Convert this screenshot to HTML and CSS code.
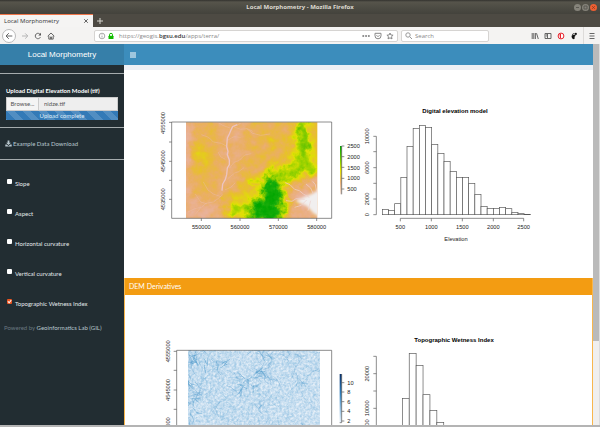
FILE: index.html
```html
<!DOCTYPE html>
<html lang="en">
<head>
<meta charset="utf-8">
<title>Local Morphometry</title>
<link rel="stylesheet" href="styles.css">
</head>
<body>
<div class="window">
  <header class="titlebar">
    <span class="window-title">Local Morphometry - Mozilla Firefox</span>
    <div class="window-controls">
      <button class="wc" aria-label="Minimize"><svg viewBox="0 0 7 7"><path d="M2 3.5h3"/></svg></button>
      <button class="wc" aria-label="Maximize"><svg viewBox="0 0 7 7"><path d="M2 2h3v3H2z"/></svg></button>
      <button class="wc wc-close" aria-label="Close"><svg viewBox="0 0 7 7"><path d="M2.3 2.3l2.4 2.4M4.7 2.3L2.3 4.7"/></svg></button>
    </div>
  </header>

  <div class="tabstrip">
    <div class="tab"><span>Local Morphometry</span><button class="plain" aria-label="Close tab"><svg class="ic-s" viewBox="0 0 6 6"><path d="M1.2 1.2l3.6 3.6M4.8 1.2L1.2 4.8"/></svg></button></div>
    <button class="plain new-tab" aria-label="New tab"><svg class="ic-m" viewBox="0 0 8 8"><path d="M4 1v6M1 4h6"/></svg></button>
  </div>

  <nav class="toolbar">
    <div class="nav-buttons">
      <button class="plain back" aria-label="Back"><svg class="ic-m" viewBox="0 0 8 8"><path d="M7.3 4H1.2M3.8 1.2L1 4l2.8 2.8"/></svg></button>
      <button class="plain forward" aria-label="Forward"><svg class="ic-m" viewBox="0 0 8 8"><path d="M1 4h5.6M4.2 1.4L6.8 4 4.2 6.6"/></svg></button>
      <button class="plain" aria-label="Reload"><svg class="ic-m" viewBox="0 0 8 8"><path d="M6.4 5.2A2.7 2.7 0 1 1 6.3 2.6"/><path class="solid" d="M7 .8v2.7H4.3z"/></svg></button>
      <button class="plain" aria-label="Home"><svg class="ic-m" viewBox="0 0 8 8"><path d="M.7 4.2L4 1l3.3 3.2M1.8 3.8v3.3h4.4V3.8M3.4 7V5h1.2v2"/></svg></button>
    </div>
    <div class="urlbar">
      <svg class="ic-m info" viewBox="0 0 8 8"><circle cx="4" cy="4" r="2.8"/><path d="M4 3.6v2M4 2.3v.6"/></svg>
      <svg class="ic-m lock" viewBox="0 0 8 8"><path d="M2.5 4V2.8a1.5 1.5 0 0 1 3 0V4"/><rect x="1.5" y="3.7" width="5" height="3.3" rx=".5"/></svg>
      <a class="url" href="#">https://geogis.<b>bgsu.edu</b>/apps/terra/</a>
      <svg class="ic-m" viewBox="0 0 8 8"><path class="dots" d="M1.2 4h.1M4 4h.1M6.8 4h.1"/></svg>
      <svg class="ic-m" viewBox="0 0 8 8"><path d="M1 1.3h6v2.5a3 3 0 0 1-6 0zM2.5 3.2L4 4.7l1.5-1.5"/></svg>
      <svg class="ic-m" viewBox="0 0 8 8"><path d="M4 1l.9 2 2.2.2-1.6 1.5.5 2.2L4 5.8 2 6.9l.5-2.2L.9 3.2 3.1 3z"/></svg>
    </div>
    <label class="search"><svg class="ic-m" viewBox="0 0 8 8"><circle cx="3" cy="3" r="2.2"/><path d="M4.7 4.7L7 7"/></svg><input type="text" placeholder="Search" aria-label="Search"></label>
    <div class="tool-icons">
      <svg class="ic-m" viewBox="0 0 8 8"><path d="M1.2 1v6M2.8 1v6M4.4 1v6M5.5 1.2L7.3 7"/></svg>
      <svg class="ic-m" viewBox="0 0 8 8"><path d="M1 1.5h6v5H1zM3.5 1.5v5M1.8 2.8h1M1.8 4h1"/></svg>
      <svg class="ic-m" viewBox="0 0 8 8"><circle class="adblock" cx="4" cy="4" r="2.9"/><path class="hand" d="M2.500 2h1.500v4H3z"/></svg>
      <svg class="ic-m" viewBox="0 0 8 8"><path class="foot" d="M1.8 3.5c1-1 3.600-.8 3.800.1.100.8-1 .7-1.100 1.400 0 .7.500.8.100 1.600C4 7.700 2.500 7 2 6 1.600 5 1.400 4 1.800 3.500z"/><circle class="foot" cx="5.800" cy="1.900" r="1.100"/><circle class="foot" cx="3.900" cy="1.700" r=".6"/><circle class="foot" cx="2.500" cy="2.200" r=".5"/></svg>
    </div>
    <button class="plain menu" aria-label="Menu"><svg class="ic-m" viewBox="0 0 8 8"><path d="M1.500 1.500h5M1.500 4h5M1.500 6.500h5"/></svg></button>
  </nav>

  <div class="page">
    <aside class="sidebar">
      <div class="brand">Local Morphometry</div>
      <section class="upload">
        <label for="dem">Upload Digital Elevation Model (tif)</label>
        <div class="file"><button>Browse...</button><input id="dem" type="text" value="nidze.tif" readonly></div>
        <div class="progress">Upload complete</div>
      </section>
      <section class="download">
        <a href="#"><svg class="dl" viewBox="0 0 7 7"><path d="M2.600.5h1.800v2.200h1.500L3.500 5 1.100 2.700h1.500z"/><path d="M.3 4.500h1.400l1.800 1.400 1.800-1.400h1.400v2H.3z"/></svg>Example Data Download</a>
      </section>
      <section class="options">
        <label><input type="checkbox"><span>Slope</span></label>
        <label><input type="checkbox"><span>Aspect</span></label>
        <label><input type="checkbox"><span>Horizontal curvature</span></label>
        <label><input type="checkbox"><span>Vertical curvature</span></label>
        <label><input type="checkbox" checked><span>Topographic Wetness Index</span></label>
      </section>
      <footer class="powered">Powered by <a href="#">Geoinformatics Lab (GIL)</a></footer>
    </aside>

    <main class="main">
      <div class="navbar"><button class="plain" aria-label="Toggle sidebar"><svg class="bars" viewBox="0 0 6 6"><path d="M0 1h6M0 3h6M0 5h6"/></svg></button></div>
      <section class="box box-dem">
        <div class="plots">
          <svg class="plot" viewBox="0 0 630 420" role="img" aria-label="Elevation map">
            <defs>
              <clipPath id="demClip"><rect x="108" y="67" width="394" height="288"/></clipPath>
              <filter id="terrain" filterUnits="userSpaceOnUse" x="108" y="67" width="394" height="288" color-interpolation-filters="sRGB">
                <feTurbulence type="fractalNoise" baseFrequency=".04" numOctaves="3" seed="8" result="n"/>
                <feDisplacementMap in="SourceGraphic" in2="n" scale="44" xChannelSelector="R" yChannelSelector="G" result="d"/>
                <feColorMatrix in="n" type="matrix" values="0 0 1 0 0  0 0 1 0 0  0 0 1 0 0  0 0 0 0 1" result="g"/>
                <feComposite in="d" in2="g" operator="arithmetic" k1="0" k2="1" k3=".2" k4="-.09" result="h"/>
                <feComponentTransfer in="h">
                  <feFuncR type="table" tableValues=".95 .93 .91 .92 .92 .91 .88 .62 .35 .12 0"/>
                  <feFuncG type="table" tableValues=".95 .80 .71 .69 .69 .75 .88 .83 .75 .69 .65"/>
                  <feFuncB type="table" tableValues=".95 .78 .66 .54 .38 .18 .02 0 0 .05 0"/>
                  <feFuncA type="linear" slope="0" intercept="1"/>
                </feComponentTransfer>
              </filter>
              <filter id="b5" x="-50%" y="-50%" width="200%" height="200%"><feGaussianBlur stdDeviation="4"/></filter>
              <filter id="b12" x="-60%" y="-60%" width="220%" height="220%"><feGaussianBlur stdDeviation="12"/></filter>
              <linearGradient id="demScale" x1="0" y1="0" x2="0" y2="1"><stop offset="0" stop-color="#00a600"/><stop offset=".25" stop-color="#63c600"/><stop offset=".5" stop-color="#e6e600"/><stop offset=".75" stop-color="#ecb176"/><stop offset="1" stop-color="#eee0dc"/></linearGradient>
            </defs>
            <g clip-path="url(#demClip)">
              <g filter="url(#terrain)">
                <rect width="630" height="420" fill="#6a6a6a"/>
                <g filter="url(#b12)">
                  <path fill="#484848" d="M50 40h90l-20 100-8 60 10 70 30 40 80-10-10 60-80 20H50z"/>
                  <path fill="#565656" d="M205 60h90v30l-30 130-20 60h-45l15-60z"/>
                  <path fill="#8e8e8e" d="M142 130h22l5 40 18 20-30 15-15-20z"/>
                  <path fill="#808080" d="M280 225l60 0 40-50 40-10 10-110h80v160l-80 25-20 120H220v-60l45-20z"/>
                  <path fill="#b4b4b4" d="M442 50h28v120l38 12v20l-45 25-55 10-22-30 50-20z"/>
                  <path fill="#fff" d="M345 225h32l16 50-4 90H300l5-50 45-30z"/>
                  <path fill="#b4b4b4" d="M238 318h60v26h-60z"/>
                  <circle cx="378" cy="128" r="14" fill="#999"/>
                  <path fill="#4c4c4c" d="M425 250l85-20v140H400l20-40z"/>
                </g>
                <g filter="url(#b5)">
                  <path fill="#b8b8b8" d="M448 60h20l6 60-8 60-14-5zM385 190l12 10 15 40-8 5zM415 210l40-10 5 15-38 15z"/>
                  <path fill="#f4f4f4" d="M350 250l22-4 8 85-68 20 16-30 22-30z"/>
                  <path fill="none" stroke="#aaa" stroke-width="8" d="M350 250l-55-15M340 280l-50-35M385 280l40 5M380 320l35 20M310 320l-70 0M262 320l-20 30M375 240l-5-35"/>
                </g>
              </g>
              <g filter="url(#b5)">
                <path fill="#f1efef" d="M510 268l-26 14-34 14-14 8 34 14 20 22 20 12z"/>
              </g>
              <g class="rivers">
                <path class="river-1" d="M262 74l-14 6-6 12-4 10-6 12-2 26 4 14-2 10 6 16 0 14-6 10-2 20-4 14-8 14-2 20"/>
                <path class="river-2" d="M218 284l-14 12-14 10-22 4-14 12-20 4-20 10M240 84l-22-8-16-10M250 80l22 8 20-2 16 8M262 76l12-8"/>
                <path class="river-2" d="M238 205l14-18 16-6 16-16 20-4M234 235l20-16 12-4 16-12M232 140l-18-10-24-4-14-14-22-8M290 86l18 14 24 6 28-4M224 270l18-8 14-14M212 290l-22-8-16-12-14-24M172 312l-20-6-16-24M234 120l18-10 20 2M150 325l-14 18M226 178l-14-8-8-14"/>
                <path class="river-3" d="M478 292l-18-10-12-10-14-4-14-14-14-6M490 282l-8-18-14-12M464 298l-26-2-12 8-18-2M470 300l-16 16-20 6M482 302l-8 30M500 276l-4-22-8-10"/>
              </g>
            </g>
            <path class="axis" d="M65 66h480v289H65zM65 67h-8M65 126h-8M65 184h-8M65 241h-8M65 298h-8M154 355v8M270 355v8M385 355v8M500 355v8"/>
            <rect x="570" y="138" width="5" height="145" fill="url(#demScale)"/>
            <path class="axis" d="M575 138v145M575 138h8M575 170h8M575 202h8M575 235h8M575 267h8"/>
            <g class="num mid"><text x="154" y="387">550000</text><text x="270" y="387">560000</text><text x="385" y="387">570000</text><text x="500" y="387">580000</text>
              <text transform="translate(45 69) rotate(-90)">4555000</text><text transform="translate(45 184) rotate(-90)">4545000</text><text transform="translate(45 298) rotate(-90)">4535000</text></g>
            <g class="num"><text x="592" y="145">2500</text><text x="592" y="177">2000</text><text x="592" y="209">1500</text><text x="592" y="241">1000</text><text x="592" y="273">500</text></g>
          </svg>
          <svg class="plot" viewBox="30 15 600 420" role="img" aria-label="Histogram of elevation">
            <text class="plot-title" x="315" y="54">Digital elevation model</text>
            <g class="bars-group" data-x="97" data-step="18.5" data-base="359" data-tops="343,346,326,247,154,100,91,97,148,175,199,229,247,247,265,298,334,340,340,337,341,352,356,358"></g>
            <path class="axis" d="M79 124v235M79 124h-9M79 170h-9M79 218h-9M79 265h-9M79 312h-9M79 359h-9M151 370h370M151 370v9M244 370v9M337 370v9M430 370v9M521 370v9"/>
            <g class="num mid"><text x="151" y="402">500</text><text x="244" y="402">1000</text><text x="337" y="402">1500</text><text x="430" y="402">2000</text><text x="521" y="402">2500</text><text x="318" y="439">Elevation</text>
              <text transform="translate(58 124) rotate(-90)">10000</text><text transform="translate(58 218) rotate(-90)">6000</text><text transform="translate(58 312) rotate(-90)">2000</text><text transform="translate(58 359) rotate(-90)">0</text></g>
          </svg>
        </div>
      </section>
      <section class="box box-derived">
        <h2>DEM Derivatives</h2>
        <div class="plots">
          <svg class="plot" viewBox="90 180 630 420" role="img" aria-label="Topographic wetness index map">
            <defs>
              <clipPath id="twiClip"><rect x="204" y="241" width="396" height="288"/></clipPath>
              <filter id="grain" filterUnits="userSpaceOnUse" x="204" y="241" width="396" height="288" color-interpolation-filters="sRGB">
                <feTurbulence type="fractalNoise" baseFrequency=".14" numOctaves="3" seed="4"/>
                <feColorMatrix type="matrix" values="-.4 0 0 0 .98  -.22 0 0 0 .98  -.1 0 0 0 .99  0 0 0 0 1"/>
              </filter>
              <linearGradient id="twiScale" x1="0" y1="0" x2="0" y2="1"><stop offset="0" stop-color="#08306b"/><stop offset=".4" stop-color="#2e7ebc"/><stop offset="1" stop-color="#e8f1fa"/></linearGradient>
            </defs>
            <g clip-path="url(#twiClip)">
              <rect x="204" y="241" width="396" height="288" filter="url(#grain)"/>
              <g id="streams"></g>
            </g>
            <path class="axis" d="M170 241h465v288H170zM170 244h-9M170 301h-9M170 360h-9M170 418h-9M170 475h-9"/>
            <rect x="659" y="312" width="6" height="146" fill="url(#twiScale)"/>
            <path class="axis" d="M665 312v146h-6M665 338h8M665 366h8M665 395h8M665 424h8M665 453h8"/>
            <g class="num mid"><text transform="translate(149 244) rotate(-90)">4555000</text><text transform="translate(149 360) rotate(-90)">4545000</text><text transform="translate(149 475) rotate(-90)">4535000</text></g>
            <g class="num"><text x="682" y="344">10</text><text x="682" y="372">8</text><text x="682" y="401">6</text><text x="682" y="430">4</text><text x="682" y="459">2</text></g>
          </svg>
          <svg class="plot" viewBox="30 180 600 420" role="img" aria-label="Histogram of topographic wetness index">
            <text class="plot-title" x="312" y="215">Topographic Wetness Index</text>
            <g class="bars-group" data-x="157" data-step="20.7" data-base="520" data-tops="385,250,286,374,421,457,480"></g>
            <path class="axis" d="M79 259v261M79 259h-9M79 311h-9M79 363h-9M79 415h-9M79 467h-9"/>
            <g class="num mid"><text transform="translate(58 311) rotate(-90)">20000</text><text transform="translate(58 415) rotate(-90)">10000</text><text transform="translate(58 467) rotate(-90)">5000</text></g>
          </svg>
        </div>
      </section>
    </main>
    <div class="scrollbar"><div class="thumb"></div></div>
  </div>
</div>
<script src="plots.js"></script>
</body>
</html>
```
FILE: plots.js
```js
const NS = 'http://www.w3.org/2000/svg';

// Histogram bars from the tops listed on each group.
document.querySelectorAll('.bars-group').forEach(g => {
  const { x, step, base, tops } = g.dataset;
  tops.split(',').forEach((top, i) => {
    const r = document.createElementNS(NS, 'rect');
    r.setAttribute('x', +x + i * step);
    r.setAttribute('y', top);
    r.setAttribute('width', step);
    r.setAttribute('height', base - top);
    g.appendChild(r);
  });
});

// Branching drainage lines of the wetness map.
let seed = 77;
const rnd = () => (seed = (seed * 16807) % 2147483647) / 2147483647;
const streams = document.getElementById('streams');
const hubs = [[212, 255], [250, 280], [310, 278], [385, 335], [425, 300], [435, 255], [215, 340], [212, 435], [385, 355], [230, 400]];
function line(x, y, a, n, w, color, alpha) {
  let d = `M${x} ${y}`;
  for (let i = 0; i < n; i++) {
    a += (rnd() - .5) * .8;
    x += Math.cos(a) * 6;
    y += Math.sin(a) * 6;
    d += `L${x.toFixed(1)} ${y.toFixed(1)}`;
    if (w > 1.5 && rnd() < .3) line(x, y, a + (rnd() < .5 ? -.8 : .8), 3, w * .6, color, alpha);
  }
  const p = document.createElementNS(NS, 'path');
  p.setAttribute('d', d);
  p.setAttribute('stroke', color);
  p.setAttribute('stroke-width', w);
  p.setAttribute('opacity', alpha);
  streams.appendChild(p);
}
for (let i = 0; i < 260; i++) line(204 + rnd() * 396, 241 + rnd() * 288, rnd() * 6.3, 3 + rnd() * 4, 1 + rnd(), '#6fb0d7', .4);
for (let i = 0; i < 140; i++) line(204 + rnd() * 396, 241 + rnd() * 288, rnd() * 6.3, 2 + rnd() * 3, 2, '#eef5fc', .45);
for (let i = 0; i < 36; i++) line(204 + rnd() * 396, 241 + rnd() * 288, rnd() * 6.3, 3 + rnd() * 4, 2, '#4a97c9', .5);
hubs.forEach(([x, y]) => {
  for (let i = 0; i < 6; i++) line(x + (rnd() - .5) * 40, y + (rnd() - .5) * 30, rnd() * 6.3, 2 + rnd() * 3, 3, '#3f90c6', .4);
});
```
FILE: styles.css
```css
* { box-sizing: border-box; }
body { margin: 0; font-family: "Open Sans", "Noto Sans", sans-serif; font-size: 6px; line-height: 8px; color: #333; }
button, input { font: inherit; color: inherit; margin: 0; }
a { color: inherit; text-decoration: none; }
svg { display: block; }

.window { display: flex; flex-direction: column; height: 100vh; overflow: hidden; border-bottom: 2px solid #b4b4b4; }
.plain { display: flex; padding: 0; border: 0; background: none; }
.ic-s, .ic-m { fill: none; stroke: #666; stroke-width: 1; flex: none; }
.ic-s { width: 6px; height: 6px; }
.ic-m { width: 8px; height: 8px; }
.ic-m .solid { fill: #555; stroke: none; }

.titlebar { display: grid; grid-template-columns: 1fr auto 1fr; align-items: center; height: 14px; background: linear-gradient(#33322e, #56544b 2px, #43423c); }
.window-title { grid-column: 2; color: #dfdbd2; font-weight: 700; font-family: "Noto Sans", sans-serif; }
.window-controls { display: flex; justify-content: flex-end; gap: 1px; padding-right: 3px; }
.wc { width: 7px; height: 7px; padding: 0; border: 0; border-radius: 50%; background: #85837a; }
.wc svg { width: 7px; height: 7px; fill: none; stroke: #5a5852; stroke-width: 1; }
.wc-close { background: #ee5f32; }
.wc-close svg { stroke: #8c3a20; }

.tabstrip { display: flex; align-items: center; height: 13px; background: #4d4a43; }
.tab { display: flex; justify-content: space-between; align-items: center; width: 93px; height: 13px; padding: 0 4px; border-top: 1px solid #f0764a; background: #f5f4f3; }
.new-tab { margin-left: 3px; }
.new-tab svg { stroke: #d8d6d0; }

.toolbar { display: flex; align-items: center; height: 17px; padding: 0 4px 0 2px; background: #f4f3f2; }
.nav-buttons { display: flex; align-items: center; gap: 5px; width: 92px; }
.back { align-items: center; justify-content: center; width: 14px; height: 14px; border: 1px solid #bbb; border-radius: 50%; background: #fff; }
.forward svg { stroke: #b5b5b5; }
.urlbar, .search { display: flex; align-items: center; height: 12px; border: 1px solid #d6d4d2; border-radius: 2px; background: #fff; }
.urlbar { flex: 1; gap: 4px; padding: 0 3px; }
.urlbar .ic-m { stroke: #888; }
.urlbar .info { stroke: #aaa; margin-right: -3px; }
.urlbar .lock { stroke: #12bc00; }
.lock rect { fill: #12bc00; stroke: none; }
.dots { stroke-width: 2; stroke-linecap: round; }
.url { flex: 1; color: #888; }
.url b { font-weight: 600; color: #333; }
.search { width: 88px; gap: 2px; margin-left: 3px; padding: 0 3px; }
.search .ic-m { stroke: #999; }
.search input { width: 100%; padding: 0; border: 0; background: none; outline: 0; }
.search input::placeholder { color: #888; opacity: 1; }
.tool-icons { display: flex; gap: 5px; margin-left: 42px; }
.ic-m .adblock { stroke: #e8202a; stroke-width: 1; fill: #fff; }
.ic-m .hand { fill: #e8202a; stroke: none; }
.ic-m .foot { fill: #111; stroke: none; }
.menu { align-items: center; height: 17px; margin-left: 5px; padding-left: 4px; border-left: 1px solid #dddbd9; }

.page { display: flex; flex: 1; min-height: 0; }
.sidebar { flex: none; width: 124px; background: #222d32; color: #b8c7ce; font-family: Lato, sans-serif; }
.brand { height: 21px; background: #367fa9; color: #fff; font: 8px/21px "Liberation Sans", sans-serif; text-align: center; }
.upload { margin-top: 8px; padding: 13px 6px 7px; border-top: 1px solid #a5abad; }
.upload label { display: block; height: 10px; color: #fff; font-weight: 700; }
.file { display: flex; height: 14px; border: 1px solid #ccc; background: #eee; color: #555; }
.file button { flex: none; width: 32px; padding: 0; border: 0; border-right: 1px solid #ccc; background: #f4f4f4; }
.file input { flex: 1; min-width: 0; padding: 0 5px; border: 0; background: none; }
.progress { height: 9px; color: #dce9f5; text-align: center; line-height: 9px; background: #337ab7 linear-gradient(45deg, rgba(255,255,255,.15) 25%, transparent 25%, transparent 50%, rgba(255,255,255,.15) 50%, rgba(255,255,255,.15) 75%, transparent 75%) 0 0 / 16px 16px; }
.download { padding: 12px 5px; border: solid #a5abad; border-width: 1px 0; }
.download a { display: flex; align-items: center; gap: 1px; line-height: 7px; }
.dl { width: 7px; height: 7px; fill: #b8c7ce; }
.options { padding: 19px 7px 0; }
.options label { display: flex; gap: 3px; height: 30px; color: #e4e9eb; }
.options span { padding-top: 1px; }
.options input { appearance: none; flex: none; width: 5px; height: 5px; border-radius: 1px; background: #fff; }
.options input:checked { background: #e95420; }
.options input:checked::after { content: ""; display: block; width: 5px; height: 5px; background: #fff; clip-path: polygon(10% 50%, 25% 40%, 42% 58%, 78% 15%, 92% 28%, 42% 88%); }
.powered { padding: 0 4px; margin-top: -5px; color: #697780; }
.powered a { color: #b8c7ce; }

.main { flex: 1; min-width: 0; overflow: hidden; background: #fff; }
.navbar { display: flex; align-items: center; height: 21px; padding-left: 6px; background: #3c8dbc; }
.bars { width: 6px; height: 6px; stroke: #fff; stroke-width: 1; }
.box-dem { border-top: 5px solid #ecf0f5; padding: 30px 0 38px; }
.box-derived { border: solid #f8b64c; border-width: 0 1px; }
.box h2 { margin: 0; padding: 0 4px; height: 17px; background: #f39c12; color: #fff; font: 400 7px/17px Lato, sans-serif; }
.box-derived .plots { padding-top: 35px; margin: 0 -1px; }
.plots { display: grid; grid-template-columns: 26fr 210fr 200fr 33fr; }
.plot { width: 100%; grid-row: 1; overflow: visible; }
.plot:first-child { grid-column: 2; }
.plot:last-child { grid-column: 3; }

.plot .axis { fill: none; stroke: #555; stroke-width: 2; }
.bars-group { fill: #fff; stroke: #555; stroke-width: 2; }
.num { font: 17px "Liberation Sans", sans-serif; fill: #222; }
.mid { text-anchor: middle; }
.plot-title { font: 700 18px "Liberation Sans", sans-serif; fill: #000; text-anchor: middle; }
#streams { fill: none; }
.rivers { fill: none; stroke-linejoin: round; }
.river-1 { stroke: #ecc4c2; stroke-width: 4; }
.river-2 { stroke: #ecbcae; stroke-width: 3; opacity: .45; }
.river-3 { stroke: #eed2cf; stroke-width: 3; opacity: .7; }

.scrollbar { flex: none; width: 7px; border-right: 1px solid #ddd; background: #f0efee; }
.thumb { height: 78%; background: #bababa; }
```
